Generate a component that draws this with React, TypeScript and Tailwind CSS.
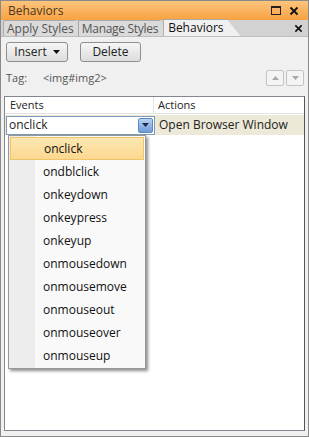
import React from "react";

const events = [
  "onclick",
  "ondblclick",
  "onkeydown",
  "onkeypress",
  "onkeyup",
  "onmousedown",
  "onmousemove",
  "onmouseout",
  "onmouseover",
  "onmouseup",
];

function CloseX({ className = "" }: { className?: string }) {
  return (
    <svg viewBox="0 0 10 10" className={className} aria-hidden>
      <path d="M1.5 1.5l7 7M8.5 1.5l-7 7" stroke="#111" strokeWidth="1.8" fill="none" />
    </svg>
  );
}

export default function App() {
  return (
    <div
      className="w-[309px] h-[437px] flex flex-col bg-[#f0f0f0] border border-[#8a8a8a] text-[#222] overflow-hidden"
      style={{ fontFamily: '"Open Sans", "DejaVu Sans", sans-serif' }}
    >
      {/* title bar */}
      <div className="h-[19px] flex items-center justify-between px-[7px] bg-gradient-to-b from-[#fcc47c] to-[#f7a23e]">
        <span className="text-[12px] text-[#4a3520]">Behaviors</span>
        <div className="flex items-center gap-[8px] pr-[2px]">
          <div className="w-[10px] h-[9px] border border-[#222] border-t-2" />
          <CloseX className="w-[10px] h-[10px]" />
        </div>
      </div>

      {/* tabs */}
      <div className="h-[17px] flex items-end justify-between bg-[#d2d2d2] border-b border-[#bdbdbd] pl-[2px] pr-[5px]">
        <div className="flex items-end h-full">
          <div className="h-[16px] pl-[3px] pr-[7px] flex items-center text-[12px] text-[#555] bg-[#dadada] border border-b-0 border-[#a9a9a9] rounded-tl-[2px] [clip-path:polygon(0_0,92%_0,100%_100%,0_100%)]">
            Apply Styles
          </div>
          <div className="h-[16px] pl-[3px] pr-[7px] flex items-center text-[12px] text-[#555] bg-[#dadada] border border-b-0 border-[#a9a9a9] -ml-[4px] [clip-path:polygon(0_0,93%_0,100%_100%,0_100%)]">
            <span className="tracking-[-0.3px]">Manage Styles</span>
          </div>
          <div className="h-[17px] pl-[4px] pr-[16px] flex items-center text-[12px] text-[#111] bg-[#f0f0f0] border border-b-0 border-[#a9a9a9] -ml-[3px] [clip-path:polygon(0_0,82%_0,100%_100%,0_100%)]">
            Behaviors
          </div>
        </div>
        <div className="h-full flex items-center">
          <CloseX className="w-[9px] h-[9px]" />
        </div>
      </div>

      {/* toolbar */}
      <div className="flex items-center gap-[12px] px-[5px] pt-[4px] h-[25px]">
        <button className="w-[62px] h-[20px] flex items-center justify-center gap-[6px] text-[12px] border border-[#8e8f8f] rounded-[3px] bg-gradient-to-b from-[#f6f6f6] to-[#dddddd]">
          Insert
          <svg viewBox="0 0 7 4" className="w-[7px] h-[4px]">
            <path d="M0 0h7L3.5 4z" fill="#111" />
          </svg>
        </button>
        <button className="w-[61px] h-[20px] flex items-center justify-center text-[12px] border border-[#8e8f8f] rounded-[3px] bg-gradient-to-b from-[#f6f6f6] to-[#dddddd]">
          Delete
        </button>
      </div>

      {/* tag row */}
      <div className="flex items-center justify-between pl-[5px] pr-[4px] mt-[7px] h-[18px] text-[11px] text-[#555]">
        <div className="flex items-center">
          <span className="w-[37px]">Tag:</span>
          <span>&lt;img#img2&gt;</span>
        </div>
        <div className="flex gap-[2px]">
          <div className="w-[18px] h-[16px] border border-[#c4c4c4] rounded-[2px] bg-[#f4f4f4] flex items-center justify-center">
            <svg viewBox="0 0 7 4" className="w-[7px] h-[4px]">
              <path d="M0 4h7L3.5 0z" fill="#a8a8a8" />
            </svg>
          </div>
          <div className="w-[18px] h-[16px] border border-[#c4c4c4] rounded-[2px] bg-[#f4f4f4] flex items-center justify-center">
            <svg viewBox="0 0 7 4" className="w-[7px] h-[4px]">
              <path d="M0 0h7L3.5 4z" fill="#a8a8a8" />
            </svg>
          </div>
        </div>
      </div>

      {/* table */}
      <div className="relative flex-1 mx-[3px] mt-[9px] mb-[5px] bg-white border border-[#828790] border-r-[#555]">
        <div className="flex h-[17px] items-center text-[11px] text-[#222] border-b border-[#e2e2e2]">
          <div className="w-[149px] pl-[5px] h-full flex items-center border-r border-[#e2e2e2]">Events</div>
          <div className="pl-[4px]">Actions</div>
        </div>
        <div className="flex h-[20px] items-center bg-[#ece9d8] mt-[1px] text-[12px]">
          <div className="w-[149px] h-[19px] ml-[1px] flex items-center justify-between border border-[#7f9db9] bg-white pl-[2px]">
            <span>onclick</span>
            <div className="w-[15px] h-[15px] mr-[1px] rounded-[2px] bg-gradient-to-b from-[#b9d3f2] to-[#6e9bd8] border border-[#5f87c0] flex items-center justify-center">
              <svg viewBox="0 0 7 4" className="w-[7px] h-[4px]">
                <path d="M0 0h7L3.5 4z" fill="#1a2a4a" />
              </svg>
            </div>
          </div>
          <div className="pl-[4px]">Open Browser Window</div>
        </div>

        {/* dropdown list */}
        <div className="absolute left-[3px] top-[38px] w-[138px] bg-[#f9f9f9] border border-[#979797] shadow-[2px_2px_3px_rgba(0,0,0,0.45)] py-[1px] text-[12px] text-[#111]">
          <div className="absolute left-0 top-0 bottom-0 w-[26px] bg-[#ededed]" />
          {events.map((e, i) => (
            <div
              key={e}
              className={
                "relative h-[23px] flex items-center pl-[33px] mx-[1px] " +
                (i === 0 ? "bg-gradient-to-b from-[#fde7b1] to-[#fbd890] border border-[#f0c46a]" : "")
              }
            >
              {e}
            </div>
          ))}
        </div>
      </div>
    </div>
  );
}
